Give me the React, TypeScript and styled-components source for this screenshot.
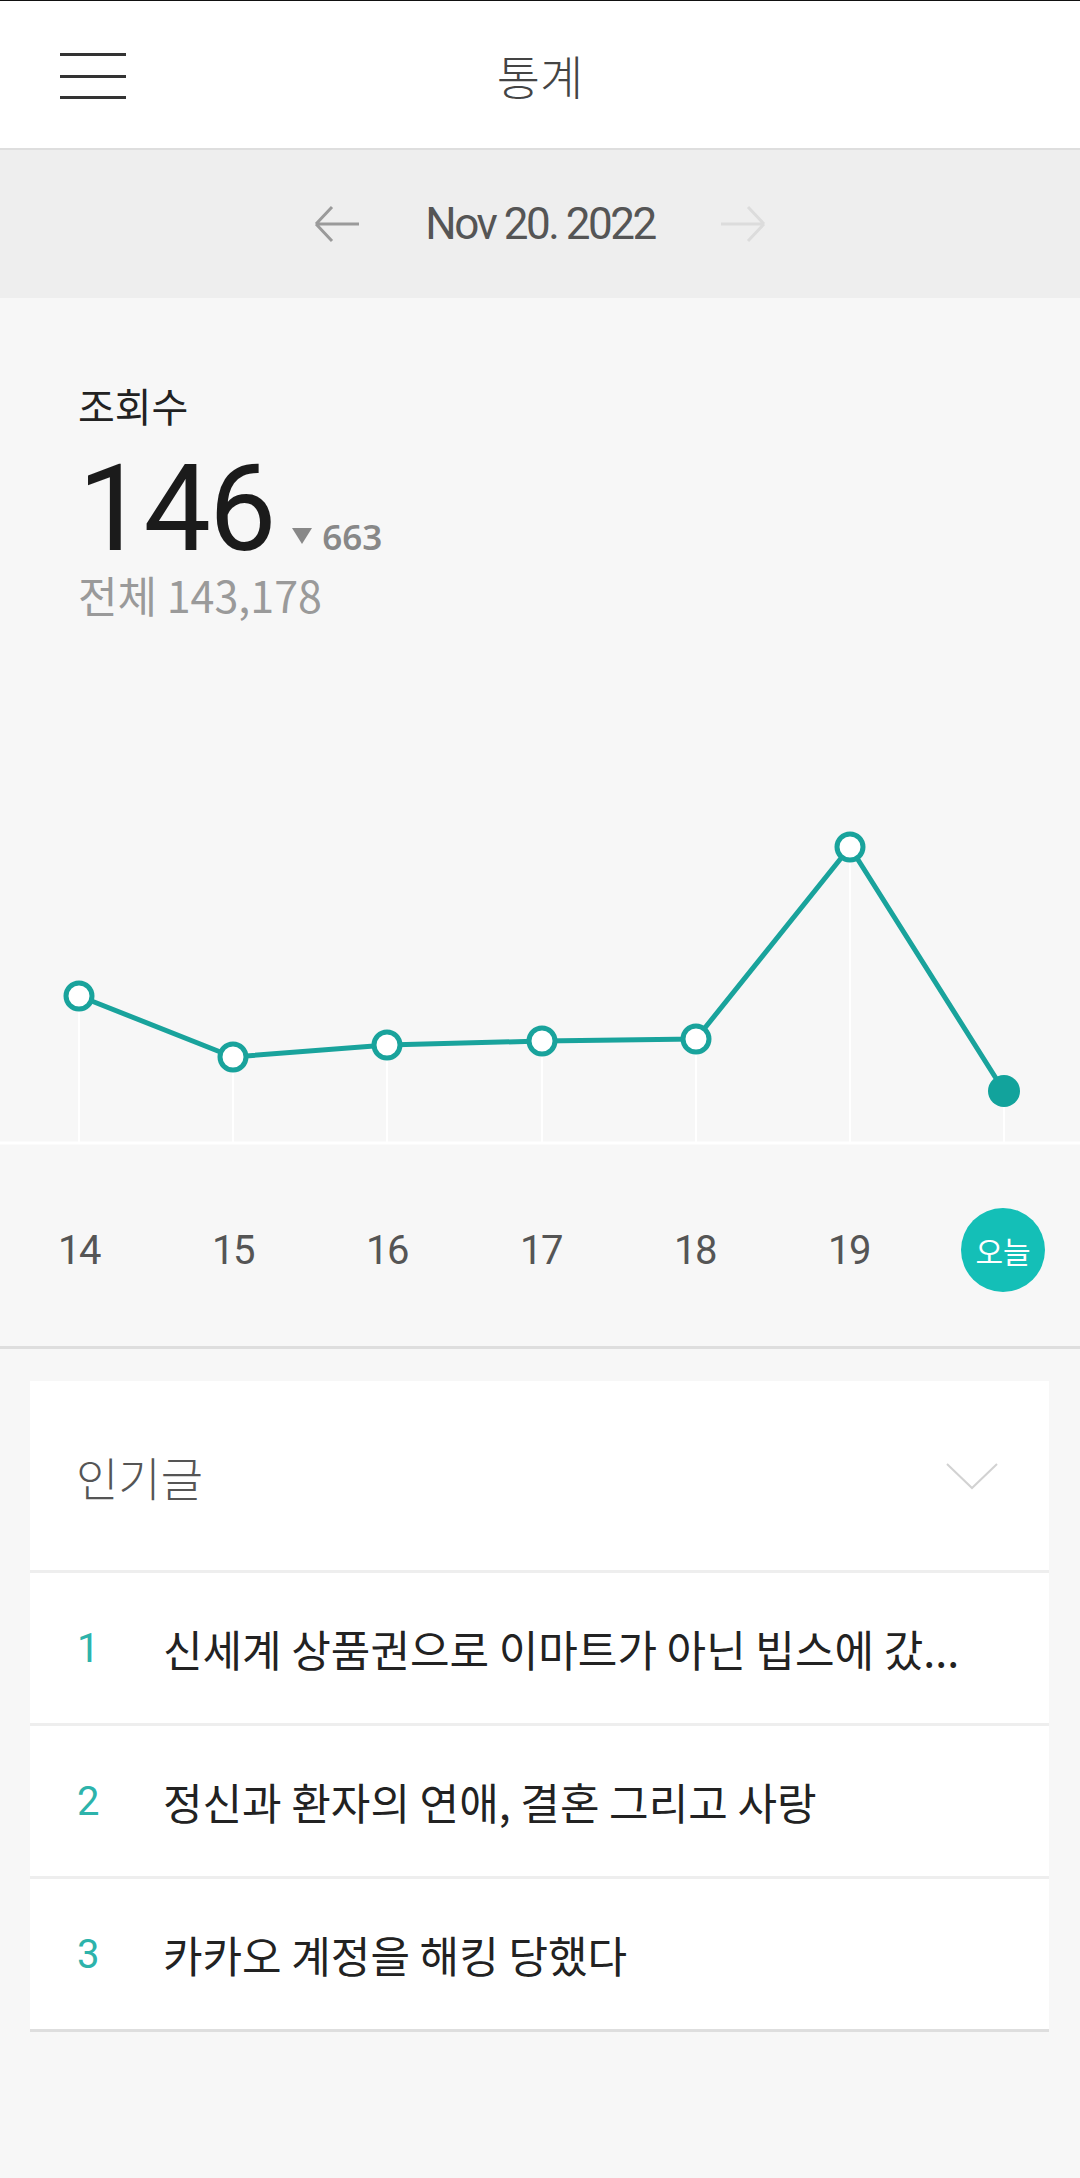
import React from "react";
import styled, { createGlobalStyle } from "styled-components";

const GlobalStyle = createGlobalStyle`
  html, body {
    margin: 0;
    padding: 0;
    background: #f7f7f7;
  }
  body {
    font-family: "Noto Sans CJK KR", "Noto Sans", sans-serif;
    color: #222;
  }
`;

const Page = styled.div`
  width: 1080px;
  min-height: 2178px;
  background: #f7f7f7;
  border-top: 1px solid #111;
`;

const Header = styled.header`
  position: relative;
  height: 147px;
  display: flex;
  align-items: center;
  justify-content: center;
  background: #fff;
  border-bottom: 2px solid #dedede;
`;

const MenuButton = styled.button`
  position: absolute;
  left: 60px;
  top: 52px;
  width: 66px;
  height: 46px;
  padding: 0;
  border: none;
  background: none;
  display: flex;
  flex-direction: column;
  justify-content: space-between;
`;

const MenuBar = styled.span`
  display: block;
  height: 3px;
  background: #333;
`;

const Title = styled.h1`
  margin: 0;
  font-size: 47px;
  font-weight: 300;
  color: #444;
  line-height: 1;
`;

const DateBar = styled.div`
  height: 148px;
  background: #eeeeee;
  display: flex;
  align-items: center;
  justify-content: center;
  gap: 64px;
`;

const DateText = styled.span`
  font-family: Roboto, "Noto Sans", sans-serif;
  font-size: 44px;
  letter-spacing: -2.5px;
  color: #555;
`;

const ArrowButton = styled.button<{ $muted?: boolean }>`
  padding: 0;
  border: none;
  background: none;
  width: 48px;
  height: 40px;
  color: ${(p) => (p.$muted ? "#dcdcdc" : "#9a9a9a")};
`;

const Summary = styled.section`
  padding: 83px 78px 0;
`;

const Label = styled.div`
  font-size: 40px;
  line-height: 48px;
  color: #222;
`;

const CountRow = styled.div`
  display: flex;
  align-items: baseline;
  gap: 18px;
  margin-top: 20px;
  height: 120px;
`;

const Count = styled.span`
  font-family: Roboto, "Noto Sans", sans-serif;
  font-size: 120px;
  line-height: 120px;
  letter-spacing: -2px;
  color: #1b1b1b;
`;

const Delta = styled.span`
  font-family: "Noto Sans", sans-serif;
  font-size: 35px;
  font-weight: 600;
  color: #888;
  display: flex;
  align-items: baseline;
  gap: 10px;

  &::before {
    content: "";
    width: 0;
    height: 0;
    border-left: 10px solid transparent;
    border-right: 10px solid transparent;
    border-top: 16px solid #888;
    transform: translateY(-6px);
  }
`;

const Total = styled.div`
  font-size: 43px;
  line-height: 50px;
  color: #9a9a9a;
`;

const Chart = styled.svg`
  display: block;
  width: 1080px;
  height: 446px;
  margin-top: 81px;
`;

const Days = styled.div`
  display: grid;
  grid-template-columns: repeat(7, 1fr);
  padding: 8px 0 0 2px;
  height: 192px;
  align-items: center;
  border-bottom: 3px solid #dedede;
`;

const Day = styled.div<{ $today?: boolean }>`
  justify-self: center;
  display: flex;
  align-items: center;
  justify-content: center;
  width: 84px;
  height: 84px;
  border-radius: 50%;
  font-family: ${(p) => (p.$today ? `"Noto Sans CJK KR", sans-serif` : `Roboto, "Noto Sans", sans-serif`)};
  font-size: ${(p) => (p.$today ? "30px" : "40px")};
  letter-spacing: ${(p) => (p.$today ? "0" : "-1.5px")};
  color: ${(p) => (p.$today ? "#fff" : "#555")};
  background: ${(p) => (p.$today ? "#14bfb7" : "transparent")};
`;

const Card = styled.section`
  margin: 32px 31px 0 30px;
  background: #fff;
  border-bottom: 3px solid #dedede;
`;

const CardHeader = styled.div`
  height: 189px;
  display: flex;
  align-items: center;
  justify-content: space-between;
  padding: 0 50px 0 46px;
`;

const CardTitle = styled.h2`
  margin: 0;
  font-size: 46px;
  font-weight: 300;
  color: #555;
`;

const Row = styled.div`
  height: 150px;
  display: flex;
  align-items: center;
  padding-left: 47px;
  border-top: 3px solid #eeeeee;
`;

const Rank = styled.span`
  width: 86px;
  font-family: Roboto, "Noto Sans", sans-serif;
  font-size: 40px;
  color: #2db3ab;
`;

const PostTitle = styled.span`
  font-size: 43px;
  color: #222;
  white-space: nowrap;
`;

const points = [
  { x: 79, y: 996 },
  { x: 233, y: 1057 },
  { x: 387, y: 1045 },
  { x: 542, y: 1041 },
  { x: 696, y: 1039 },
  { x: 850, y: 847 },
  { x: 1004, y: 1091 },
];
const CHART_TOP = 700;
const BASE = 1143 - CHART_TOP;

const days = ["14", "15", "16", "17", "18", "19"];

const posts = [
  "신세계 상품권으로 이마트가 아닌 빕스에 갔...",
  "정신과 환자의 연애, 결혼 그리고 사랑",
  "카카오 계정을 해킹 당했다",
];

const Arrow: React.FC<{ flip?: boolean }> = ({ flip }) => (
  <svg width="48" height="40" viewBox="0 0 48 40" style={flip ? { transform: "scaleX(-1)" } : undefined}>
    <path d="M3 20 H46 M3 20 L19 3 M3 20 L19 37" fill="none" stroke="currentColor" strokeWidth="3" />
  </svg>
);

const App: React.FC = () => {
  const pts = points.map((p) => ({ x: p.x, y: p.y - CHART_TOP }));
  const last = pts[pts.length - 1];

  return (
    <Page>
      <GlobalStyle />
      <Header>
        <MenuButton aria-label="menu">
          <MenuBar />
          <MenuBar />
          <MenuBar />
        </MenuButton>
        <Title>통계</Title>
      </Header>

      <DateBar>
        <ArrowButton aria-label="prev">
          <Arrow />
        </ArrowButton>
        <DateText>Nov 20. 2022</DateText>
        <ArrowButton $muted aria-label="next">
          <Arrow flip />
        </ArrowButton>
      </DateBar>

      <Summary>
        <Label>조회수</Label>
        <CountRow>
          <Count>146</Count>
          <Delta>663</Delta>
        </CountRow>
        <Total>전체 143,178</Total>
      </Summary>

      <Chart viewBox="0 0 1080 446">
        {pts.map((p) => (
          <line key={`g${p.x}`} x1={p.x} y1={p.y} x2={p.x} y2={BASE} stroke="#fff" strokeWidth="2" />
        ))}
        <line x1="0" y1={BASE} x2="1080" y2={BASE} stroke="#fff" strokeWidth="3" />
        <polyline
          points={pts.map((p) => `${p.x},${p.y}`).join(" ")}
          fill="none"
          stroke="#19a39c"
          strokeWidth="5"
          strokeLinejoin="round"
        />
        {pts.slice(0, -1).map((p) => (
          <circle key={`c${p.x}`} cx={p.x} cy={p.y} r="13" fill="#fff" stroke="#19a39c" strokeWidth="5" />
        ))}
        <circle cx={last.x} cy={last.y} r="16" fill="#12a39c" />
      </Chart>

      <Days>
        {days.map((d) => (
          <Day key={d}>{d}</Day>
        ))}
        <Day $today>오늘</Day>
      </Days>

      <Card>
        <CardHeader>
          <CardTitle>인기글</CardTitle>
          <svg width="54" height="28" viewBox="0 0 54 28">
            <path d="M2 2 L27 26 L52 2" fill="none" stroke="#d2d2d2" strokeWidth="2" />
          </svg>
        </CardHeader>
        {posts.map((t, i) => (
          <Row key={t}>
            <Rank>{i + 1}</Rank>
            <PostTitle>{t}</PostTitle>
          </Row>
        ))}
      </Card>
    </Page>
  );
};

export default App;
